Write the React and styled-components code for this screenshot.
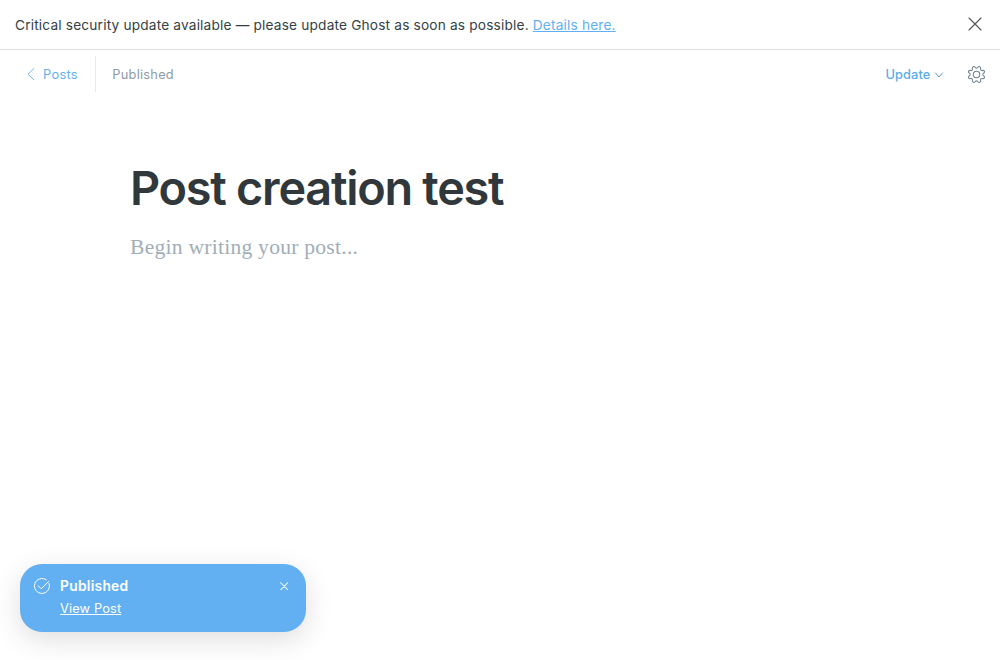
import React from "react";
import styled, { createGlobalStyle } from "styled-components";

const GlobalStyle = createGlobalStyle`
  *, *::before, *::after { box-sizing: border-box; }
  body {
    margin: 0;
    background: #fff;
    color: #394047;
    font-family: Inter, "Liberation Sans", sans-serif;
    -webkit-font-smoothing: antialiased;
  }
`;

const Page = styled.div`
  height: 660px;
  display: flex;
  flex-direction: column;
  position: relative;
  overflow: hidden;
`;

const Alert = styled.aside`
  height: 50px;
  flex: none;
  display: flex;
  align-items: center;
  justify-content: space-between;
  padding: 0 18px 0 15px;
  border-bottom: 1px solid #dddfe1;
  font-size: 13.7px;
  line-height: 20px;
  letter-spacing: 0.17px;
  color: #343f44;
`;

const AlertLink = styled.a`
  color: #62b0f2;
  text-decoration: underline;
`;

const IconButton = styled.button`
  display: flex;
  padding: 0;
  border: 0;
  background: none;
  color: ${(p) => p.$color};
`;

const AlertClose = styled(IconButton)`
  margin-bottom: 1px;
`;

const Toolbar = styled.header`
  height: 48px;
  flex: none;
  display: flex;
  align-items: center;
  padding: 0 15px 0 26px;
  font-size: 12.8px;
  line-height: 20px;
  letter-spacing: 0.3px;
`;

const Label = styled.span`
  padding-top: 2px;
`;

const BackLink = styled.a`
  height: 36px;
  display: flex;
  align-items: center;
  gap: 7px;
  padding-right: 17px;
  border-right: 1px solid #e5eaed;
  color: #62b0f2;
`;

const Status = styled.div`
  padding: 2px 0 0 16.5px;
  letter-spacing: 0.24px;
  color: #8e9ba5;
`;

const Actions = styled.div`
  display: flex;
  align-items: center;
  gap: 24.5px;
  margin-left: auto;
`;

const UpdateButton = styled.button`
  display: flex;
  align-items: center;
  gap: 3px;
  padding: 0;
  border: 0;
  background: none;
  color: #5aace8;
  font: 500 12.8px/20px Inter, sans-serif;
  letter-spacing: 0.13px;
`;

const Editor = styled.main`
  width: 740px;
  margin: 60px auto 0;
`;

const Title = styled.h1`
  margin: 0;
  font-size: 46.8px;
  line-height: 60px;
  font-weight: 600;
  letter-spacing: -1.25px;
  color: #30383c;
`;

const Placeholder = styled.p`
  margin: 13px 0 0;
  font-family: "Liberation Serif", serif;
  font-size: 21.6px;
  line-height: 32px;
  letter-spacing: 0.24px;
  color: #a0aeb8;
`;

const Toast = styled.article`
  position: absolute;
  left: 20px;
  bottom: 28px;
  width: 286px;
  height: 68px;
  display: flex;
  align-items: flex-start;
  padding: 12px 18px 0 14px;
  border-radius: 22px;
  background: #62b0f2;
  color: #fff;
  box-shadow: 0 0 1px rgba(0, 0, 0, 0.04), 0 8px 28px rgba(0, 0, 0, 0.13);
`;

const ToastIcon = styled.span`
  display: flex;
  margin: 2px 10px 0 0;
`;

const ToastBody = styled.div`
  flex: 1;
`;

const ToastTitle = styled.div`
  font-size: 13.8px;
  line-height: 20px;
  font-weight: 600;
  letter-spacing: 0.27px;
`;

const ToastLink = styled.a`
  display: block;
  width: max-content;
  margin-top: 3px;
  font-size: 12.8px;
  line-height: 20px;
  letter-spacing: 0.14px;
  text-decoration: underline;
`;

const ToastClose = styled(IconButton)`
  margin-top: 5.5px;
`;

function Cross({ size, stroke }) {
  return (
    <svg width={size} height={size} viewBox="0 0 14 14" fill="none" stroke="currentColor" strokeWidth={stroke} strokeLinecap="round">
      <path d="M1 1l12 12M13 1L1 13" />
    </svg>
  );
}

function Gear() {
  return (
    <svg width="17" height="17" viewBox="0 0 24 24" fill="none" stroke="currentColor" strokeWidth="1.5" strokeLinejoin="round">
      <path d="M10.546 2.438a1.957 1.957 0 0 0 2.908 0L14.4 1.4a1.959 1.959 0 0 1 3.41 1.413l-.071 1.4A1.958 1.958 0 0 0 19.79 6.27l1.4-.071A1.959 1.959 0 0 1 22.6 9.606l-1.042.94a1.96 1.96 0 0 0 0 2.909l1.042.94a1.959 1.959 0 0 1-1.413 3.41l-1.4-.071a1.958 1.958 0 0 0-2.056 2.056l.071 1.4A1.959 1.959 0 0 1 14.4 22.6l-.941-1.041a1.959 1.959 0 0 0-2.908 0L9.606 22.6A1.959 1.959 0 0 1 6.2 21.192l.072-1.4a1.958 1.958 0 0 0-2.056-2.056l-1.4.071A1.958 1.958 0 0 1 1.4 14.4l1.041-.94a1.96 1.96 0 0 0 0-2.909L1.4 9.606A1.958 1.958 0 0 1 2.809 6.2l1.4.071a1.958 1.958 0 0 0 2.058-2.06L6.2 2.81A1.959 1.959 0 0 1 9.606 1.4z" />
      <circle cx="12" cy="12" r="4.5" />
    </svg>
  );
}

export default function App() {
  return (
    <>
      <GlobalStyle />
      <Page>
        <Alert>
          <span>
            Critical security update available — please update Ghost as soon as possible.{" "}
            <AlertLink>Details here.</AlertLink>
          </span>
          <AlertClose $color="#50575c" aria-label="Close alert">
            <Cross size={14} stroke={1.1} />
          </AlertClose>
        </Alert>
        <Toolbar>
          <BackLink>
            <svg width="10" height="14" viewBox="0 0 10 14" fill="none" stroke="currentColor" strokeWidth="0.9" strokeLinecap="round" strokeLinejoin="round">
              <path d="M7.8 1.6L2 7.2L7.8 12.8" />
            </svg>
            <Label>Posts</Label>
          </BackLink>
          <Status>Published</Status>
          <Actions>
            <UpdateButton>
              <Label>Update</Label>
              <svg width="10" height="8" viewBox="0 0 10 8" fill="none" stroke="#6296b8" strokeWidth="1" strokeLinecap="round" strokeLinejoin="round">
                <path d="M1.5 3L5 7L8.5 3" />
              </svg>
            </UpdateButton>
            <IconButton $color="#738492" aria-label="Settings">
              <Gear />
            </IconButton>
          </Actions>
        </Toolbar>
        <Editor>
          <Title>Post creation test</Title>
          <Placeholder>Begin writing your post...</Placeholder>
        </Editor>
        <Toast>
          <ToastIcon>
            <svg width="16" height="16" viewBox="0 0 16 16" fill="none" stroke="currentColor" strokeWidth="1" strokeLinecap="round" strokeLinejoin="round">
              <path d="M15.1 5.6A7.5 7.5 0 1 1 12.3 1.8" />
              <path d="M4.3 7.9L7.2 10.8L14.6 3.5" />
            </svg>
          </ToastIcon>
          <ToastBody>
            <ToastTitle>Published</ToastTitle>
            <ToastLink>View Post</ToastLink>
          </ToastBody>
          <ToastClose $color="#e4f2fd" aria-label="Close">
            <Cross size={8.5} stroke={1.8} />
          </ToastClose>
        </Toast>
      </Page>
    </>
  );
}
